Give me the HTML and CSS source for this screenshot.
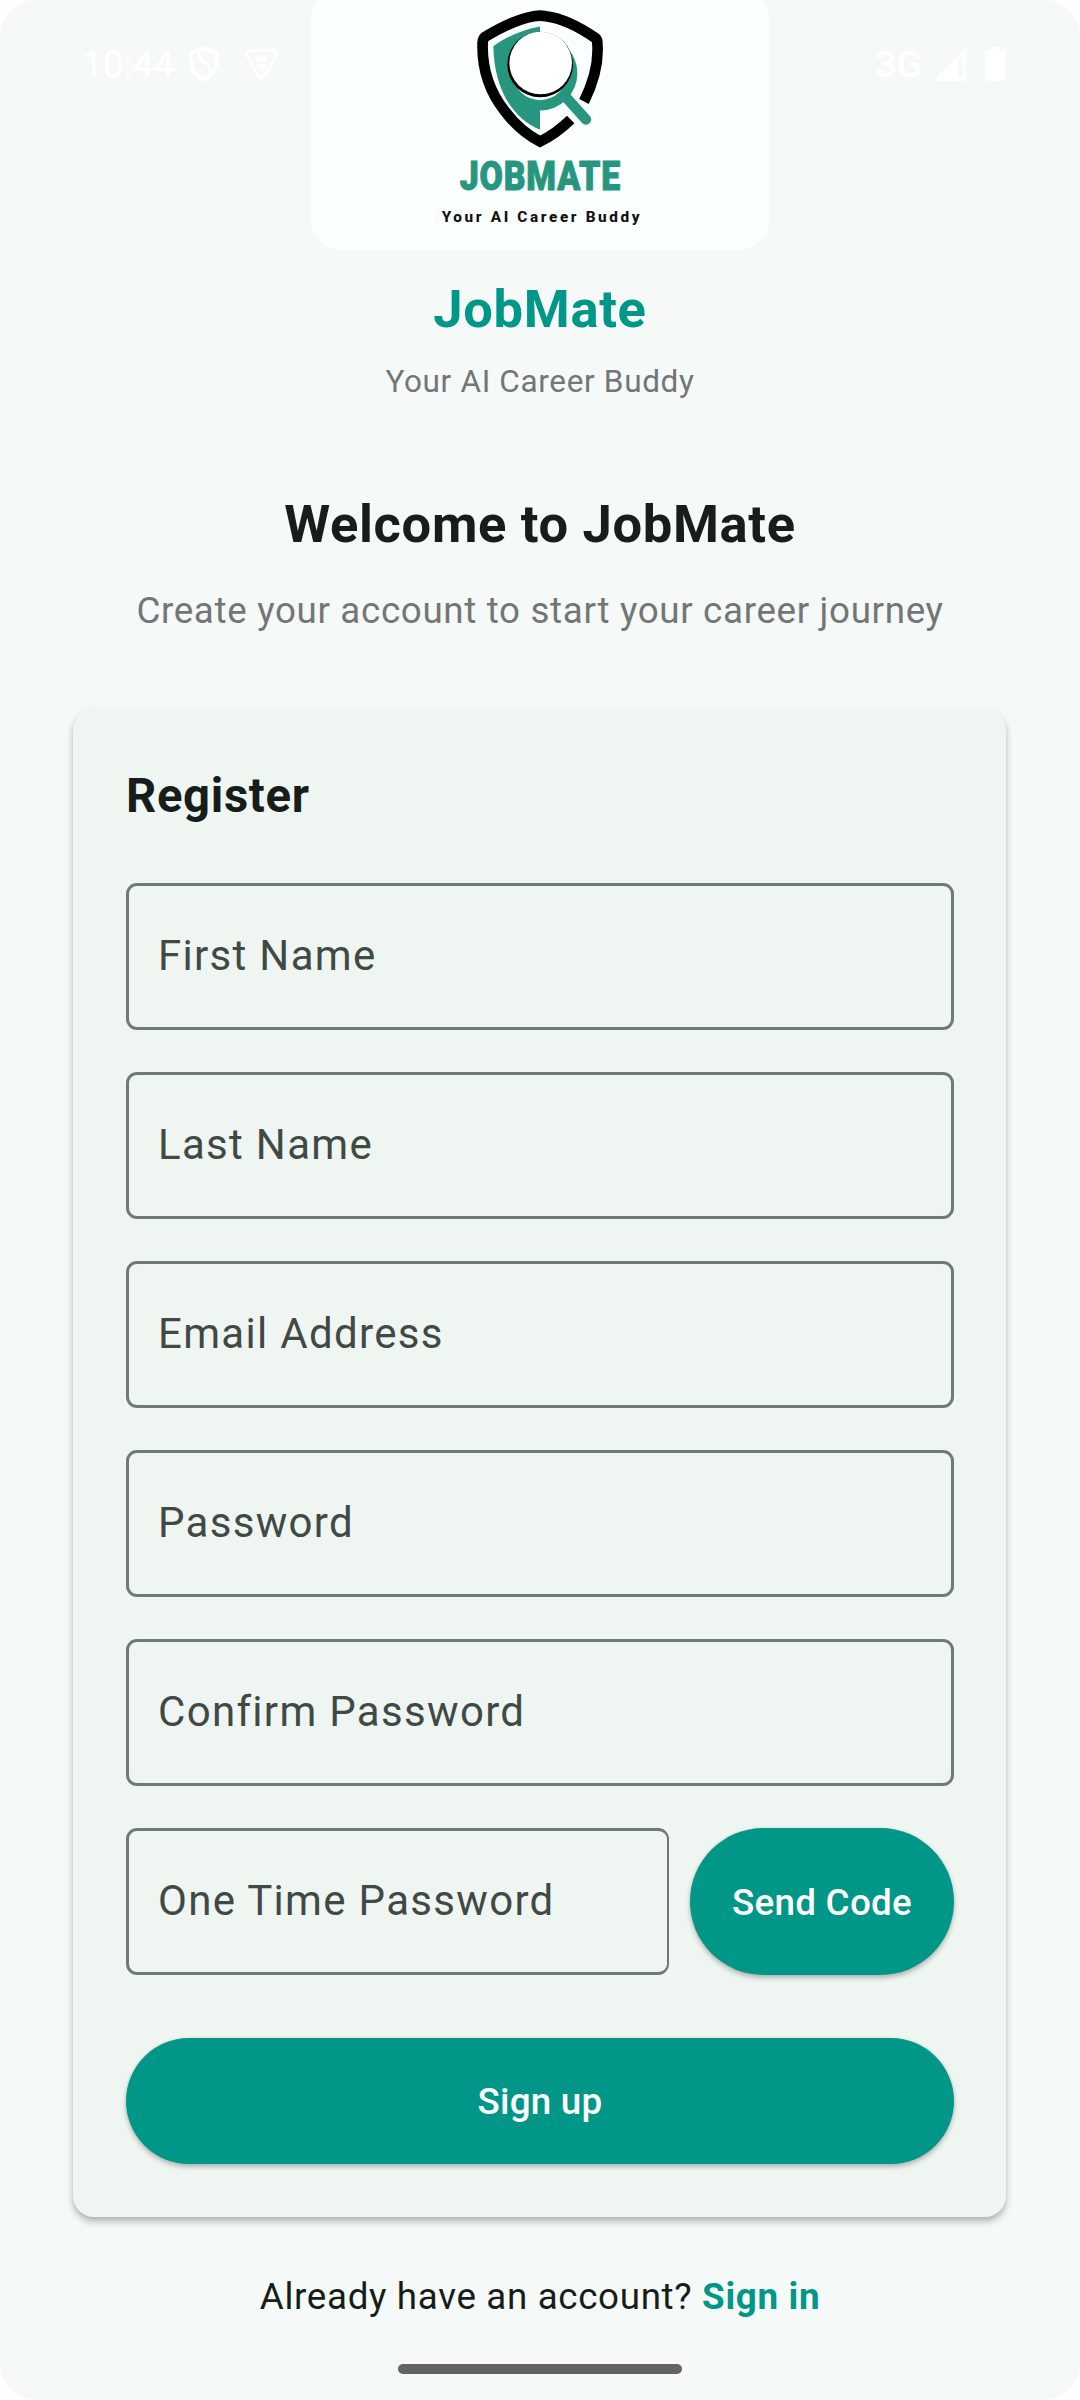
FILE: index.html
```html
<!DOCTYPE html>
<html lang="en">
<head>
<meta charset="utf-8">
<title>JobMate – Register</title>
<link rel="stylesheet" href="styles.css">
</head>
<body>
<div class="screen">
  <div class="status-bar">
    <div class="status-left">
      <span class="clock">10:44</span>
      <svg class="icon-shield" viewBox="568 142 90 108"><path d="M612 149 L651 162 V192 Q650 224 612 243 Q575 224 574 192 V162 Z" fill="none" stroke="#fff" stroke-width="11" stroke-linejoin="round"/><path d="M597 154 C592 196 636 186 632 222" fill="none" stroke="#fff" stroke-width="9"/></svg>
      <svg class="icon-debug" viewBox="734 147 104 98"><path d="M749 154 H823 Q836 158 829 170 L796 229 Q786 244 776 229 L743 170 Q736 158 749 154 Z" fill="none" stroke="#fff" stroke-width="8"/><path d="M768 188 Q768 173 786 173 Q804 173 804 188 Z M769 195 H803 L786 222 Z" fill="#fff"/><path d="M774 169 l4 6 M798 169 l-4 6" stroke="#fff" stroke-width="2"/></svg>
    </div>
    <div class="status-right">
      <span class="network">3G</span>
      <svg class="icon-signal" viewBox="280 142 98 98"><path d="M280 240 L378 142 V240 Z M354 180 V230 H368 V166 Z" fill="#fff" fill-rule="evenodd"/></svg>
      <svg class="icon-battery" viewBox="435 141 60 102"><path d="M452 151 V141 H478 V151 H490 Q495 151 495 156 V237 Q495 243 490 243 H440 Q435 243 435 237 V156 Q435 151 440 151 Z" fill="#fff"/></svg>
    </div>
  </div>

  <header class="brand">
    <svg class="logo" viewBox="33 -37.5 1374 787.5" role="img" aria-label="JobMate">
      <path d="M852 303 C886 235 896 176 892 128 Q893 117 884 111 C832 75 782 53 738 47 Q720 44 702 47 C650 56 600 82 557 108 Q548 114 548 126 C545 205 568 272 613 330 Q660 393 720 423 Q767 401 812 357" fill="none" stroke="#000" stroke-width="32"/>
      <path d="M720 78 C670 87 620 108 580 137 C582 255 630 350 720 388 V330 A112 112 0 0 0 832 218 Q832 190 816 160 L720 130 Z" fill="#27967f"/>
      <path d="M796 288 L858 357" stroke="#27967f" stroke-width="31" stroke-linecap="round"/>
      <circle cx="720" cy="218" r="81" fill="#fbffff"/>
      <circle cx="720.5" cy="192" r="98.5"/>
      <circle cx="722" cy="187.500" r="94" fill="#fff"/>
      <text class="logo-name" x="479" y="569" textLength="484" lengthAdjust="spacingAndGlyphs">JOBMATE</text>
      <text class="logo-tagline" x="425" y="665" textLength="594">Your AI Career Buddy</text>
    </svg>
    <div class="brand-name">JobMate</div>
    <div class="brand-tagline">Your AI Career Buddy</div>
  </header>

  <h1 class="welcome">Welcome to JobMate</h1>
  <p class="intro">Create your account to start your career journey</p>

  <main class="card">
    <h2 class="card-title">Register</h2>
    <div class="fields">
      <div class="field">First Name</div>
      <div class="field">Last Name</div>
      <div class="field">Email Address</div>
      <div class="field">Password</div>
      <div class="field">Confirm Password</div>
      <div class="otp-row">
        <div class="field field-otp">One Time Password</div>
        <button class="button button-code">Send Code</button>
      </div>
    </div>
    <button class="button button-signup">Sign up</button>
  </main>

  <p class="signin">Already have an account? <a class="signin-link">Sign in</a></p>
  <div class="home-handle"></div>
</div>
</body>
</html>
```
FILE: styles.css
```css
* { box-sizing: border-box; }

body {
  margin: 0;
  background: #fdfefe;
  font-family: Roboto, "Liberation Sans", sans-serif;
}

.screen {
  position: relative;
  display: flex;
  flex-direction: column;
  align-items: center;
  width: 1080px;
  height: 2400px;
  overflow: hidden;
  border-radius: 36px;
  background: #f5faf8;
  color: #171d1b;
  letter-spacing: .66px;
}

.status-bar {
  position: absolute;
  top: 0;
  left: 0;
  right: 0;
  height: 128px;
  padding: 0 75px 0 82px;
  display: flex;
  justify-content: space-between;
  align-items: center;
  color: #fff;
  letter-spacing: 0;
}

.status-left,
.status-right { display: flex; align-items: center; }

.clock { width: 107px; font-size: 37px; }
.network { margin-right: 11px; font-size: 37.5px; font-weight: 500; }
.icon-shield { width: 30px; height: 36px; margin-right: 25px; }
.icon-debug { width: 35px; height: 33px; }
.icon-signal { width: 33px; height: 33px; margin-right: 19px; }
.icon-battery { width: 20px; height: 34px; }

.brand {
  display: flex;
  flex-direction: column;
  align-items: center;
}

.logo {
  display: block;
  width: 458px;
  height: 262.5px;
  margin-top: -12.5px;
  border-radius: 31.5px;
  background: #fbffff;
}

.logo-name {
  font: 900 121px Roboto, sans-serif;
  letter-spacing: 3px;
  fill: #27967f;
  stroke: #27967f;
  stroke-width: 3px;
}

.logo-tagline {
  font: 800 46px Roboto, sans-serif;
  letter-spacing: 0;
  fill: #111;
}

.brand-name {
  margin-top: 25px;
  font-size: 52.5px;
  line-height: 68px;
  font-weight: 700;
  color: #009688;
}

.brand-tagline {
  margin-top: 18px;
  font-size: 31.5px;
  line-height: 42px;
  color: #737675;
}

.welcome {
  margin: 87px 0 0;
  font-size: 52.5px;
  line-height: 68px;
  font-weight: 700;
}

.intro {
  margin: 29px 0 0;
  font-size: 36.75px;
  line-height: 48px;
  color: #737675;
}

.card {
  display: flex;
  flex-direction: column;
  width: 933px;
  height: 1509px;
  margin: 73px 1px 0 0;
  padding: 58px 52px 53px 53px;
  border-radius: 21px;
  background: #eff5f1;
  box-shadow: 0 5px 7px rgba(0, 0, 0, .24), 0 2px 4px rgba(0, 0, 0, .06);
}

.card-title {
  margin: 0 0 57px;
  font-size: 47.25px;
  line-height: 60px;
  font-weight: 700;
}

.fields {
  display: flex;
  flex-direction: column;
  gap: 42px;
}

.field {
  display: flex;
  align-items: center;
  height: 147px;
  padding: 0 0 2px 29px;
  border: 3px solid #6f7976;
  border-radius: 11px;
  font-size: 42px;
  letter-spacing: 1.3125px;
  color: #3f4946;
}

.otp-row { display: flex; gap: 21px; }
.field-otp { flex: 1; border-right-width: 2px; }

.button {
  border: 0;
  padding: 0;
  background: #009688;
  color: #fff;
  font: 500 36.75px Roboto, "Liberation Sans", sans-serif;
  letter-spacing: .2625px;
  box-shadow: 0 3px 5px rgba(0, 0, 0, .25), 0 0 3px rgba(0, 0, 0, .08);
}

.button-code { width: 264px; height: 147px; padding-top: 1px; border-radius: 73.5px; }
.button-signup { height: 126px; margin-top: 63px; border-radius: 63px; }

.signin {
  margin: 56px 0 0;
  font-size: 36.75px;
  line-height: 48px;
}

.signin-link { color: #009688; font-weight: 700; }

.home-handle {
  width: 284px;
  height: 10px;
  margin-top: 43px;
  border-radius: 5px;
  background: #636564;
}
```
